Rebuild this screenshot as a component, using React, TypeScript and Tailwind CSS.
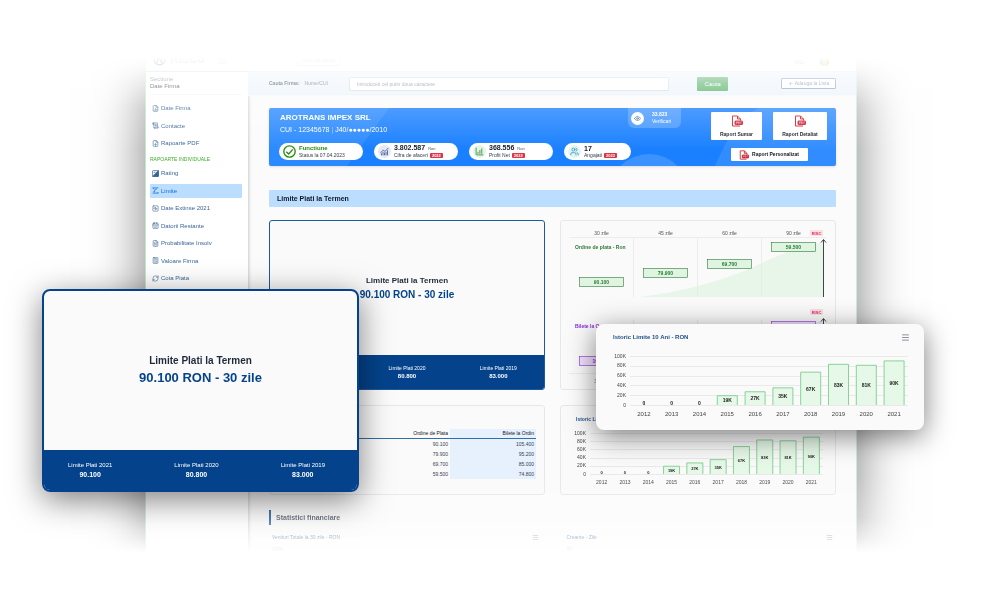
import { ReactNode } from 'react'
import {
	Calculator,
	CalendarDays,
	ChartColumnIncreasing,
	ChartNoAxesCombined,
	Eye,
	FileChartColumn,
	FileDown,
	FileText,
	Menu,
	Plus,
	RefreshCw,
	ScrollText,
	SquareActivity,
	Users,
} from 'lucide-react'

const HISTORY: { year: number, value: number }[] = [
	{ year: 2012, value: 0 },
	{ year: 2013, value: 0 },
	{ year: 2014, value: 0 },
	{ year: 2015, value: 19 },
	{ year: 2016, value: 27 },
	{ year: 2017, value: 35 },
	{ year: 2018, value: 67 },
	{ year: 2019, value: 83 },
	{ year: 2020, value: 81 },
	{ year: 2021, value: 90 },
]

const LIMITS = [
	{ label: 'Limite Plati 2021', value: '90.100' },
	{ label: 'Limite Plati 2020', value: '80.800' },
	{ label: 'Limite Plati 2019', value: '83.000' },
]

const TERMS = [
	{ term: '30 zile', order: '90.100', bill: '105.400' },
	{ term: '45 zile', order: '79.900', bill: '95.200' },
	{ term: '60 zile', order: '69.700', bill: '85.000' },
	{ term: '90 zile', order: '59.500', bill: '74.800' },
]

const COMPANY_LINKS = [
	{ label: 'Date Firma', icon: FileChartColumn },
	{ label: 'Contacte', icon: ScrollText },
	{ label: 'Rapoarte PDF', icon: FileDown },
]

const REPORT_LINKS = [
	{ label: 'Rating', icon: RatingIcon },
	{ label: 'Limite', icon: LimitIcon, active: true },
	{ label: 'Date Extinse 2021', icon: SquareActivity },
	{ label: 'Datorii Restante', icon: CalendarDays },
	{ label: 'Probabilitate Insolv', icon: FileText },
	{ label: 'Valoare Firma', icon: Calculator },
	{ label: 'Cota Piata', icon: RefreshCw },
]

function RatingIcon({ className }: { className?: string }) {
	return (
		<svg viewBox="0 0 24 24" fill="none" stroke="currentColor" strokeWidth="2.5" className={className}>
			<rect x="2" y="2" width="20" height="20" rx="2" />
			<path d="M22 2v20H2z" fill="currentColor" />
			<path d="M6 8h6" />
		</svg>
	)
}

function LimitIcon({ className }: { className?: string }) {
	return (
		<svg viewBox="0 0 24 24" fill="none" stroke="currentColor" strokeWidth="2.5" className={className}>
			<path d="M2 3h20M2 21h20M7 8l-4-5M17 7h-5l-6 10h5M18 17l4 4" />
		</svg>
	)
}

function PdfIcon({ className }: { className?: string }) {
	return (
		<svg viewBox="0 0 24 24" fill="none" stroke="#cc1f2f" strokeWidth="2" strokeLinejoin="round" className={className}>
			<path d="M18 22H3V2h10l6 6v3" />
			<path d="M13 2v6h6" />
			<rect x="8" y="12" width="15" height="7" rx="1" fill="#cc1f2f" />
			<path d="M11 17.500v-4h2v2h-2M15 13.500v4h1.500v-4zM19.500 17.500v-4h2" stroke="#fff" strokeWidth="0.800" />
		</svg>
	)
}

function NavLink({ label, icon: Icon, active }: { label: string, icon: any, active?: boolean }) {
	return (
		<a
			href="#"
			className={`flex h-[14px] items-center gap-[2px] rounded-[1px] pl-[2px] text-[6px] ${active ? 'bg-[#bcdefe] text-[#0d6fe8]' : 'text-[#3a659a]'}`}
		>
			<Icon className="size-[7px] shrink-0" />
			{label}
		</a>
	)
}

function SideBar() {
	return (
		<aside className="w-[102px] shrink-0 bg-white pt-1 pr-[6px] pl-1 shadow-[1px_0_3px_rgba(0,0,0,0.2)]">
			<div className="border-b border-gray-100 pb-1 text-[6px] leading-[7px]">
				<p className="text-gray-500">Sectiune</p>
				<p className="text-gray-900">Date Firma</p>
			</div>
			<nav className="mt-[6px]">
				<div className="flex h-[49px] flex-col justify-between">
					{
						COMPANY_LINKS.map((link) => <NavLink key={link.label} {...link} />)
					}
				</div>
				<h2 className="pt-1 pb-[2px] text-[5px] leading-[10px] text-[#3fae2a]">RAPOARTE INDIVIDUALE</h2>
				<div className="flex h-[119px] flex-col justify-between">
					{
						REPORT_LINKS.map((link) => <NavLink key={link.label} {...link} />)
					}
				</div>
			</nav>
		</aside>
	)
}

function TopBar() {
	return (
		<header className="flex h-6 items-end justify-between border-b border-gray-200 bg-white px-[7px] pb-[5px]">
			<div className="flex items-center gap-1">
				<svg viewBox="0 0 24 24" fill="none" stroke="#1f4f88" strokeWidth="2.5" className="size-[13px]">
					<circle cx="12" cy="12" r="10" />
					<path d="M8 18V7l8 10V6" />
				</svg>
				<span className="text-[12px] leading-[13px] font-bold text-gray-400">RisCo</span>
				<Menu className="ml-2 size-[10px] text-gray-400" />
				<button type="button" className="ml-[66px] rounded-[2px] border border-gray-300 px-1 text-[6px] leading-[10px] text-gray-500">Abonamente</button>
			</div>
			<div className="flex items-center gap-4 pr-5">
				<span className="text-[6px] text-gray-500">RO</span>
				<span className="size-[9px] rounded-full bg-gradient-to-r from-blue-700 via-yellow-300 to-red-600" />
			</div>
		</header>
	)
}

function SearchBar() {
	return (
		<form className="flex h-6 items-center border-b border-[#f3f8fc] bg-[#e9f2fa] pr-5 pl-[21px] text-[5px]">
			<label htmlFor="company" className="flex w-20 gap-[5px] text-gray-600">
				<b className="text-gray-800">Cauta Firma:</b>
				<span>Nume/CUI</span>
			</label>
			<input
				id="company"
				placeholder="Introduceti cel putin doua caractere"
				className="h-[14px] min-w-0 flex-1 rounded-[1px] border border-gray-300 bg-white px-[7px] placeholder:text-gray-500"
			/>
			<button type="submit" className="ml-7 h-[14px] w-[31px] rounded-[1px] bg-[#2f9e44] text-[6px] text-white">Cauta</button>
			<button type="button" className="ml-[53px] flex h-[11px] w-[55px] items-center justify-center gap-[2px] rounded-[1px] border border-[#7a93b8] bg-white text-[#5b79a8]">
				<Plus className="size-[5px]" />
				Adauga la Lista
			</button>
		</form>
	)
}

function Pill({ icon, value, unit, label, year, className }: { icon: ReactNode, value: string, unit?: string, label: string, year?: string, className: string }) {
	return (
		<div className={`flex h-[17px] items-center gap-[3px] rounded-full bg-white pl-1 ${className}`}>
			{icon}
			<div>
				<p className={`leading-[7px] font-bold ${year ? 'text-[7px]' : 'text-[6px]'}`}>
					{value}
					{unit && <span className="ml-[3px] text-[4px] font-normal text-gray-600">{unit}</span>}
				</p>
				<p className="flex items-center gap-[2px] text-[5px] leading-[7px] text-gray-700">
					{label}
					{year && <span className="rounded-[1px] bg-[#dc3545] px-[2px] text-[4px] leading-[5px] font-bold text-white">{year}</span>}
				</p>
			</div>
		</div>
	)
}

function CompanyCard() {
	return (
		<section className="relative flex h-[58px] justify-between overflow-hidden rounded-[2px] bg-[#1a80ff] text-white shadow">
			<svg viewBox="0 0 567 58" preserveAspectRatio="none" className="absolute inset-0 size-full" fill="#fff">
				<path d="M0 0H120L78 58H0z" opacity="0.080" />
				<path d="M490 0Q466 10 446 58H567V0z" opacity="0.100" />
				<circle cx="380" cy="86" r="40" opacity="0.150" />
			</svg>
			<div className="relative min-w-0 pt-[5px] pl-[10px]">
				<h1 className="pl-px text-[8px] leading-[10px] font-bold">AROTRANS IMPEX SRL</h1>
				<p className="pt-px pl-px text-[7px] leading-[12px]">CUI - 12345678 <span className="opacity-50">|</span> J40/●●●●●/2010</p>
				<div className="mt-[7px] flex gap-[11px] text-gray-900">
					<Pill
						className="w-[84px] text-[#2a8a12]"
						icon={
							<svg viewBox="0 0 24 24" fill="none" stroke="#2a8a12" strokeWidth="2.5" className="size-[13px]">
								<circle cx="12" cy="12" r="10.500" />
								<path d="M6 12.500l4.500 4L18 8" />
							</svg>
						}
						value="Functiune"
						label="Status la 07.04.2023"
					/>
					<Pill
						className="w-[84px]"
						icon={<span className="rounded-full bg-[#e4e9f5] p-[2px]"><ChartNoAxesCombined className="size-[9px] text-[#2d4a8a]" /></span>}
						value="3.802.587"
						unit="Ron"
						label="Cifra de afaceri"
						year="2022"
					/>
					<Pill
						className="w-[84px]"
						icon={<span className="rounded-full bg-[#e4f5e6] p-[2px]"><ChartColumnIncreasing className="size-[9px] text-[#237a2b]" /></span>}
						value="368.556"
						unit="Ron"
						label="Profit Net"
						year="2022"
					/>
					<Pill
						className="w-[67px]"
						icon={<span className="rounded-full bg-[#e2f4f7] p-[2px]"><Users className="size-[9px] text-[#2596a8]" /></span>}
						value="17"
						label="Angajati"
						year="2022"
					/>
				</div>
			</div>
			<div className="absolute top-0 right-[155px] flex h-5 w-[53px] items-center gap-2 rounded-b-[6px] bg-white/20 pl-[3px]">
				<span className="rounded-full bg-white p-[3px]"><Eye className="size-[7px] text-[#1f4f88]" /></span>
				<div className="text-[5px] leading-[7px]">
					<p className="font-bold">33.823</p>
					<p>Verificari</p>
				</div>
			</div>
			<div className="relative flex w-[125px] flex-wrap content-start justify-between gap-y-2 pt-1 pr-[9px] text-[5px] font-bold text-gray-900">
				<button type="button" className="flex h-7 w-[51px] flex-col items-center justify-center gap-[3px] rounded-[1px] bg-white leading-[8px]">
					<PdfIcon className="size-3" />
					Raport Sumar
				</button>
				<button type="button" className="flex h-7 w-[54px] flex-col items-center justify-center gap-[3px] rounded-[1px] bg-white leading-[8px]">
					<PdfIcon className="size-3" />
					Raport Detaliat
				</button>
				<button type="button" className="mx-auto flex h-[13px] w-[77px] items-center justify-center gap-[3px] rounded-[1px] bg-white">
					<PdfIcon className="size-[10px]" />
					Raport Personalizat
				</button>
			</div>
		</section>
	)
}

function LimitCard({ large }: { large?: boolean }) {
	return (
		<section className={`flex flex-col overflow-hidden bg-[#fafafa] text-center ${large ? 'h-full rounded-[8px] border-2 border-[#04438c]' : 'h-[170px] rounded-[3px] border border-[#1d5a9a]'}`}>
			<div className={`flex flex-1 flex-col items-center justify-center ${large ? 'pb-1' : ''}`}>
				<h2 className={`font-bold text-gray-800 ${large ? 'text-[10px] leading-[17px]' : 'text-[8px] leading-[14px]'}`}>Limite Plati la Termen</h2>
				<p className={`font-bold text-[#04438c] ${large ? 'text-[13px] leading-[17px]' : 'text-[10px] leading-[14px]'}`}>90.100 RON - 30 zile</p>
			</div>
			<div className={`flex items-center bg-[#04438c] text-white ${large ? 'h-10 justify-between pr-8 pl-6 text-[6px] leading-[10px]' : 'h-[34px] justify-around text-[5px] leading-[8px]'}`}>
				{
					LIMITS.map((limit) => (
						<div key={limit.label}>
							<p>{limit.label}</p>
							<p className={`font-bold ${large ? 'text-[7px]' : 'text-[6px]'}`}>{limit.value}</p>
						</div>
					))
				}
			</div>
		</section>
	)
}

function RiskRow({ top, title, color, fill, values }: { top: number, title: string, color: string, fill: string, values: string[] }) {
	const offsets = [38, 29, 20, 3]

	return (
		<g transform={`translate(0 ${top})`}>
			<path d="M80 57Q150 48 202 23Q238 6 263 2V57z" fill={fill} opacity="0.650" />
			<text x="15" y="9" fill={color} fontSize="5" fontWeight="bold">{title}</text>
			{
				values.map((value, i) => (
					<g key={value}>
						<rect x={19.5 + i * 64} y={offsets[i] - 0.5} width="44" height="9" fill={fill} stroke={color} strokeWidth="0.600" />
						<text x={41.5 + i * 64} y={offsets[i] + 6} textAnchor="middle" fill={color} fontSize="5" fontWeight="bold">{value}</text>
					</g>
				))
			}
			<rect x="250" y="-10" width="13" height="6" rx="1" fill="#fbdde4" />
			<text x="256.500" y="-5.500" textAnchor="middle" fill="#e0315a" fontSize="4" fontWeight="bold">RISC</text>
			<path d="M263.500 57V0M261 2.500L263.500 -0.500L266 2.500" fill="none" stroke="#444" />
		</g>
	)
}

function RiskCard() {
	return (
		<section className="h-[170px] rounded-[3px] border border-gray-200 bg-[#fafafa]">
			<svg viewBox="1 1 274 168" className="size-full">
				<path d="M9 17.500H266M73.500 17v60M137.500 17v60M201.500 17v60M73.500 100v52M137.500 100v52M201.500 100v52M9 153.500H266" stroke="#ececec" />
				{
					TERMS.map(({ term }, i) => (
						<text key={term} x={41.5 + i * 64} y="15" textAnchor="middle" fill="#555" fontSize="5">{term}</text>
					))
				}
				{
					TERMS.map(({ term }, i) => (
						<text key={term} x={41.5 + i * 64} y="163" textAnchor="middle" fill="#777" fontSize="5">{term}</text>
					))
				}
				<RiskRow top={20} title="Ordine de plata - Ron" color="#2c7a35" fill="#dff5e1" values={TERMS.map((t) => t.order)} />
				<RiskRow top={99} title="Bilete la Ordin - Ron" color="#8a2be2" fill="#f0e2fc" values={TERMS.map((t) => t.bill)} />
			</svg>
		</section>
	)
}

function TermsCard() {
	return (
		<section className="h-[90px] rounded-[3px] border border-gray-200 bg-[#fafafa] px-2 pt-[23px]">
			<table className="w-full table-fixed text-right text-[5px] leading-[10px] text-gray-700">
				<thead>
					<tr className="border-b border-[#2f6ea8] leading-[9px] text-gray-900">
						<td />
						<th scope="col" className="pr-[2px] font-normal">Ordine de Plata</th>
						<th scope="col" className="bg-[#e6f1fd] pr-[2px] font-normal">Bilete la Ordin</th>
					</tr>
				</thead>
				<tbody>
					{
						TERMS.map((row) => (
							<tr key={row.term}>
								<td />
								<td className="pr-[2px]">{row.order}</td>
								<td className="bg-[#e6f1fd] pr-[2px]">{row.bill}</td>
							</tr>
						))
					}
				</tbody>
			</table>
		</section>
	)
}

function HistoryChart({ width, height, left, right, top, base, bar, size }: { width: number, height: number, left: number, right: number, top: number, base: number, bar: number, size: number }) {
	const step = (right - left) / HISTORY.length
	const scale = (base - top) / 100

	return (
		<svg viewBox={`0 0 ${width} ${height}`} className="w-full" fontSize={size} fill="#444">
			{
				[100, 80, 60, 40, 20, 0].map((tick) => (
					<g key={tick}>
						<path d={`M${left} ${Math.round(base - tick * scale) + 0.5}H${right}`} stroke="#e9e9e9" />
						<text x={left - 4} y={base - tick * scale + 1.5} textAnchor="end" fontSize="5">{tick ? `${tick}K` : '0'}</text>
					</g>
				))
			}
			{
				HISTORY.map(({ year, value }, i) => {
					const x = left + step * (i + 0.5)
					const h = value * scale

					return (
						<g key={year} textAnchor="middle">
							{
								value > 0 && <path d={`M${x - bar / 2} ${base}v${-h}h${bar}v${h}`} fill="#e6f8e8" stroke="#7ccf8c" strokeWidth="0.900" />
							}
							<text x={x} y={value ? base - h / 2 + 2 : base} fontSize={size - 1} fontWeight="bold" fill="#222">{value ? `${value}K` : '0'}</text>
							<text x={x} y={base + size + 5}>{year}</text>
						</g>
					)
				})
			}
		</svg>
	)
}

function StatsHeading({ title, tick }: { title: string, tick: string }) {
	return (
		<div className="px-[3px] text-[5px] text-[#1f4f88]">
			<div className="flex items-center justify-between">
				<h3>{title}</h3>
				<Menu className="size-[7px] text-gray-500" />
			</div>
			<p className="pt-[6px] text-gray-500">{tick}</p>
		</div>
	)
}

export default function App() {
	return (
		<main className="relative min-h-screen overflow-hidden bg-white font-['Liberation_Sans',Arial,sans-serif] leading-none text-gray-900">
			<div className="pt-12 [mask-image:linear-gradient(to_bottom,transparent_57px,rgba(0,0,0,0.45)_83px,rgba(0,0,0,0.78)_108px,black_150px,black_475px,rgba(0,0,0,0.7)_518px,rgba(0,0,0,0.35)_538px,transparent_553px)]">
				<div className="mr-[14.3%] ml-[14.5%] border-x border-[#c9f0d2] bg-[#fbfbfb] shadow-[0_20px_50px_rgba(0,0,0,0.5)]">
					<TopBar />
					<div className="flex">
						<SideBar />
						<div className="min-w-0 flex-1">
							<SearchBar />
							<div className="pt-3 pr-5 pl-[21px]">
								<CompanyCard />
								<h2 className="mt-6 rounded-[1px] bg-[#bcdefe] px-2 text-[7px] leading-[17px] font-bold">Limite Plati la Termen</h2>
								<div className="mt-[13px] grid grid-cols-2 gap-[15px]">
									<LimitCard />
									<RiskCard />
									<TermsCard />
									<section className="h-[90px] rounded-[3px] border border-gray-200 bg-[#fafafa]">
										<h2 className="pt-[10px] pl-[15px] text-[5px] leading-[6px] font-bold text-[#1f4f88]">Istoric Limite 10 Ani - RON</h2>
										<HistoryChart width={274} height={70} left={29} right={262} top={11} base={52} bar={16} size={5} />
									</section>
								</div>
								<h2 className="mt-[15px] border-l-2 border-[#04438c] pl-[5px] text-[7px] leading-[15px] font-bold text-gray-700">Statistici financiare</h2>
								<div className="mt-[9px] grid h-[26px] grid-cols-2 gap-x-[22px]">
									<StatsHeading title="Venituri Totale la 30 zile - RON" tick="100K" />
									<StatsHeading title="Creante - Zile" tick="20" />
								</div>
							</div>
						</div>
					</div>
				</div>
			</div>

			<div className="absolute top-[289px] left-[4.2%] h-[203px] w-[31.7%] rounded-[8px] shadow-[0_8px_32px_rgba(0,0,0,0.5)]">
				<LimitCard large />
			</div>

			<section className="absolute top-[324px] left-[59.6%] w-[32.8%] rounded-[8px] bg-[#fafafa] shadow-[0_6px_28px_rgba(0,0,0,0.5)]">
				<div className="flex items-center justify-between pt-[9px] pr-[14px] pl-[17px]">
					<h2 className="text-[6px] leading-[9px] font-bold text-[#1f4f88]">Istoric Limite 10 Ani - RON</h2>
					<button type="button" aria-label="Meniu grafic"><Menu className="size-[9px] text-gray-500" /></button>
				</div>
				<HistoryChart width={328} height={88} left={34} right={312} top={14} base={63} bar={20} size={6} />
			</section>
		</main>
	)
}
